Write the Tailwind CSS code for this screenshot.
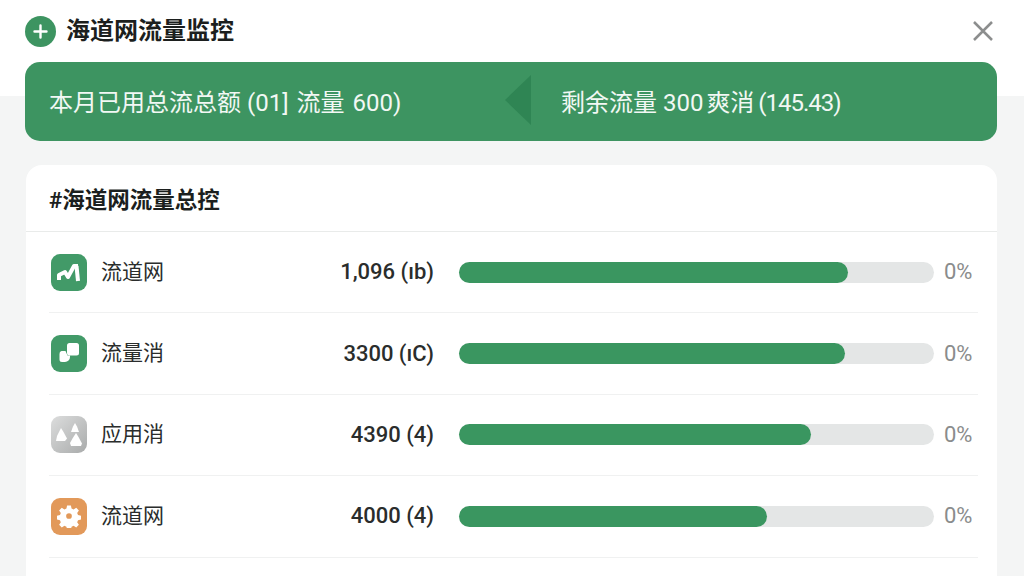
<!DOCTYPE html>
<html lang="zh-CN">
<head>
    <meta charset="UTF-8">
    <meta name="viewport" content="width=device-width, initial-scale=1.0">
    <title>海道网流量监控</title>
    <script src="https://cdn.jsdelivr.net/npm/@tailwindcss/browser@4"></script>
</head>
<body class="h-[576px] overflow-hidden bg-[linear-gradient(#ffffff_96px,#f4f5f5_96px)] font-['Roboto','Noto_Sans_CJK_SC',sans-serif]">
    <!-- Header -->
    <header class="flex h-[62px] items-center justify-between pl-[25px] pr-[31px]">
        <div class="flex items-center gap-[10px]">
            <div class="flex h-[31px] w-[31px] items-center justify-center rounded-full bg-[#3d9461]">
                <svg class="h-[15px] w-[15px]" viewBox="0 0 15 15" fill="none" stroke="#ffffff" stroke-width="2.4" stroke-linecap="round"><path d="M7.5 1.5v12M1.5 7.5h12"/></svg>
            </div>
            <h1 class="text-[24px] leading-none font-bold text-[#1c1f1e]">海道网流量监控</h1>
        </div>
        <svg class="h-[20px] w-[20px]" viewBox="0 0 20 20" fill="none" stroke="#8c8e8e" stroke-width="2.5"><path d="M1 1l18 18M19 1L1 19"/></svg>
    </header>

    <!-- Summary banner -->
    <section class="relative mr-[27px] ml-[25px] flex h-[79px] items-center rounded-[15px] bg-[#3d9461] pt-[2px] pl-[24px] text-[24px] leading-none text-[#f2f8f4]">
        <div class="w-[512px] shrink-0">本月已用总流总额 (01]<span class="ml-[8px]">流量</span> <span class="ml-[2px]">600)</span></div>
        <div>剩余流量 300 <span class="ml-[-3px]">爽消</span> <span class="ml-[-2px] tracking-[-1px]">(145.43)</span></div>
        <div class="absolute left-[480px] top-[13px] h-0 w-0 border-y-[25px] border-r-[26px] border-y-transparent border-r-[#2f8554]"></div>
    </section>

    <!-- Traffic list -->
    <section class="mt-[24px] ml-[26px] mr-[27px] rounded-t-[16px] bg-white">
        <h2 class="flex h-[67px] items-center border-b border-[#e9ebea] pt-[5px] pl-[23px] text-[22.5px] leading-none font-bold text-[#1c1f1e]">#海道网流量总控</h2>
        <ul class="ml-[23px] mr-[19px]">
            <li class="flex h-[81.4px] items-center border-b border-[#f0f1f1] pl-[2px]">
                <div class="h-[37px] w-[36px] rounded-[9px] bg-[#429a68]">
                    <svg class="h-[37px] w-[36px]" viewBox="0 0 36 37" fill="none" stroke="#ffffff" stroke-width="4" stroke-linejoin="round"><path d="M8 26v-5l6-3 3 5 6-11h4"/><path d="M25.5 12l1.5 15"/></svg>
                </div>
                <span class="ml-[14px] w-[120px] text-[21px] leading-none text-[#2a2d2c]">流道网</span>
                <span class="w-[213px] text-right text-[22px] leading-none font-medium text-[#2a2d2c]">1,096 (ıb)</span>
                <div class="ml-[25px] h-[21px] w-[475px] rounded-full bg-[#e4e6e6]"><div class="h-full w-[389px] rounded-full bg-[#3a9660]"></div></div>
                <span class="ml-[10px] text-[22px] leading-none text-[#8a8c8c]">0%</span>
            </li>
            <li class="flex h-[81.4px] items-center border-b border-[#f0f1f1] pl-[2px]">
                <div class="h-[37px] w-[36px] rounded-[9px] bg-[#429a68]">
                    <svg class="h-[37px] w-[36px]" viewBox="0 0 36 37" fill="#ffffff"><rect x="16" y="8" width="12" height="12.5" rx="2.5"/><path d="M10.5 16h4l2 4.5h2.5v1.5a5 5 0 0 1-5 5h-3a2.5 2.5 0 0 1-2.5-2.5V19a3 3 0 0 1 2-3z"/></svg>
                </div>
                <span class="ml-[14px] w-[120px] text-[21px] leading-none text-[#2a2d2c]">流量消</span>
                <span class="w-[213px] text-right text-[22px] leading-none font-medium text-[#2a2d2c]">3300 (ıC)</span>
                <div class="ml-[25px] h-[21px] w-[475px] rounded-full bg-[#e4e6e6]"><div class="h-full w-[386px] rounded-full bg-[#3a9660]"></div></div>
                <span class="ml-[10px] text-[22px] leading-none text-[#8a8c8c]">0%</span>
            </li>
            <li class="flex h-[81.4px] items-center border-b border-[#f0f1f1] pl-[2px]">
                <div class="h-[37px] w-[36px] rounded-[9px] bg-[linear-gradient(135deg,#dcdddd,#a9abab)]">
                    <svg class="h-[37px] w-[36px]" viewBox="0 0 36 37" fill="#ffffff"><path d="M10 12l2.5 4 3.5 6.5-2 2.5H5l1-5z"/><path d="M24 7l2 3.5 2 5.5h-8l2-5.5z"/><path d="M25 17l2.5 4 3.5 6.5-1 2.5H20l-1-3 2.5-4.5z"/></svg>
                </div>
                <span class="ml-[14px] w-[120px] text-[21px] leading-none text-[#2a2d2c]">应用消</span>
                <span class="w-[213px] text-right text-[22px] leading-none font-medium text-[#2a2d2c]">4390 (4)</span>
                <div class="ml-[25px] h-[21px] w-[475px] rounded-full bg-[#e4e6e6]"><div class="h-full w-[352px] rounded-full bg-[#3a9660]"></div></div>
                <span class="ml-[10px] text-[22px] leading-none text-[#8a8c8c]">0%</span>
            </li>
            <li class="flex h-[81.4px] items-center border-b border-[#f0f1f1] pl-[2px]">
                <div class="flex h-[37px] w-[36px] items-center justify-center rounded-[9px] bg-[#e2995a]">
                    <svg class="h-[24px] w-[24px]" viewBox="0 0 24 24"><path fill="#ffffff" fill-rule="evenodd" d="M10 1h4l.7 3.2 2.1.9 2.8-1.8 2.8 2.8-1.8 2.8.9 2.1 3.2.7v4l-3.2.7-.9 2.1 1.8 2.8-2.8 2.8-2.8-1.8-2.1.9-.7 3.2h-4l-.7-3.2-2.1-.9-2.8 1.8-2.8-2.8 1.8-2.8-.9-2.1-3.2-.7v-4l3.2-.7.9-2.1-1.8-2.8 2.8-2.8 2.8 1.8 2.1-.9zM12 9a3 3 0 1 0 0 6 3 3 0 0 0 0-6z" transform="translate(.6 .6) scale(.95)"/></svg>
                </div>
                <span class="ml-[14px] w-[120px] text-[21px] leading-none text-[#2a2d2c]">流道网</span>
                <span class="w-[213px] text-right text-[22px] leading-none font-medium text-[#2a2d2c]">4000 (4)</span>
                <div class="ml-[25px] h-[21px] w-[475px] rounded-full bg-[#e4e6e6]"><div class="h-full w-[308px] rounded-full bg-[#3a9660]"></div></div>
                <span class="ml-[10px] text-[22px] leading-none text-[#8a8c8c]">0%</span>
            </li>
        </ul>
        <div class="h-[40px]"></div>
    </section>
</body>
</html>
